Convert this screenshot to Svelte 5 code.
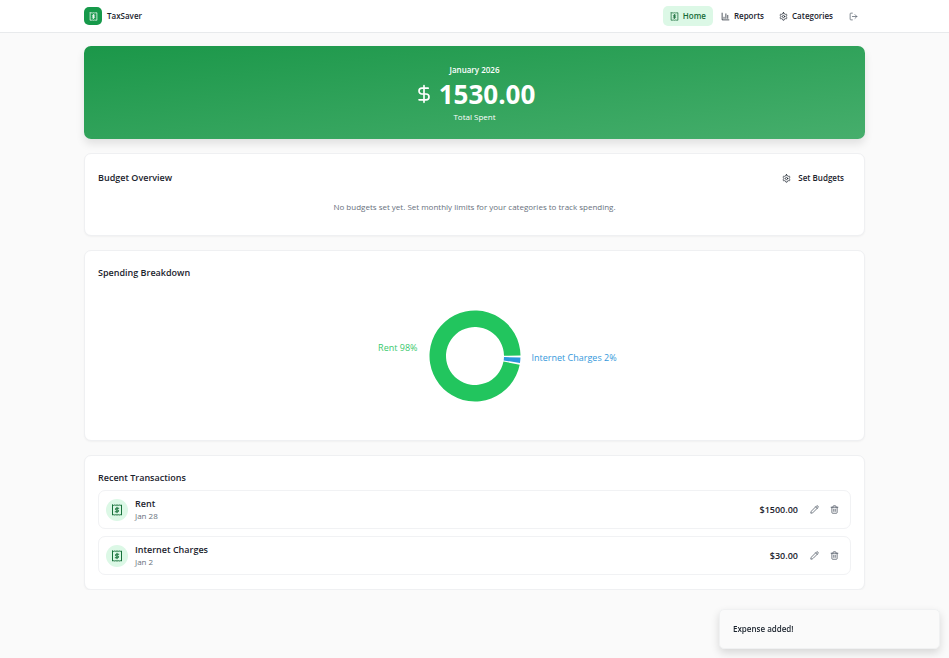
<script>
  const transactions = [
    { name: 'Rent', date: 'Jan 28', amount: '$1500.00' },
    { name: 'Internet Charges', date: 'Jan 2', amount: '$30.00' }
  ];

  const outer = 45.5;
  const inner = 29;

  // Angles run clockwise in degrees, starting at three o'clock.
  function ring(from, to) {
    const point = (r, deg) => {
      const a = (deg * Math.PI) / 180;
      return `${(r * Math.cos(a)).toFixed(3)} ${(r * Math.sin(a)).toFixed(3)}`;
    };
    const large = to - from > 180 ? 1 : 0;
    return `M${point(outer, from)}A${outer} ${outer} 0 ${large} 1 ${point(outer, to)}L${point(inner, to)}A${inner} ${inner} 0 ${large} 0 ${point(inner, from)}Z`;
  }

  const slices = [
    { color: '#22c55e', d: ring(11, 359.5) },
    { color: '#2b97dc', d: ring(2, 8.8) }
  ];
</script>

{#snippet receipt()}
  <svg class="icon" viewBox="0 0 24 24" aria-hidden="true">
    <path d="M3 2v20l2.500-.6 2 .6 2-.6 2.500.6 2.500-.6 2 .6 2-.6 2.500.6V2l-2.500.6-2-.6-2 .6L12 2l-2.500.6-2-.6-2 .6Z" />
    <path d="M15.500 8.500h-5a1.750 1.750 0 1 0 0 3.500h3a1.750 1.750 0 1 1 0 3.500H8.500" />
    <path d="M12 17.5v-11" />
  </svg>
{/snippet}

{#snippet gear()}
  <svg class="icon" viewBox="0 0 24 24" aria-hidden="true">
    <path d="M12.22 2h-.44a2 2 0 0 0-2 2v.18a2 2 0 0 1-1 1.73l-.43.25a2 2 0 0 1-2 0l-.15-.08a2 2 0 0 0-2.73.73l-.22.38a2 2 0 0 0 .73 2.73l.15.1a2 2 0 0 1 1 1.72v.51a2 2 0 0 1-1 1.74l-.15.09a2 2 0 0 0-.73 2.73l.22.38a2 2 0 0 0 2.73.73l.15-.08a2 2 0 0 1 2 0l.43.25a2 2 0 0 1 1 1.73V20a2 2 0 0 0 2 2h.44a2 2 0 0 0 2-2v-.18a2 2 0 0 1 1-1.73l.43-.25a2 2 0 0 1 2 0l.15.08a2 2 0 0 0 2.73-.73l.22-.39a2 2 0 0 0-.73-2.73l-.15-.08a2 2 0 0 1-1-1.74v-.5a2 2 0 0 1 1-1.74l.15-.09a2 2 0 0 0 .73-2.73l-.22-.38a2 2 0 0 0-2.73-.73l-.15.08a2 2 0 0 1-2 0l-.43-.25a2 2 0 0 1-1-1.73V4a2 2 0 0 0-2-2z" />
    <circle cx="12" cy="12" r="3" />
  </svg>
{/snippet}

<div class="page">
  <header>
    <div class="bar">
      <a class="brand" href="#home">
        <span class="logo">{@render receipt()}</span>
        TaxSaver
      </a>
      <nav>
        <a class="active" href="#home">{@render receipt()}Home</a>
        <a href="#reports">
          <svg class="icon" viewBox="0 0 24 24" aria-hidden="true">
            <path d="M3 3v18h18M18 17V9M13 17V5M8 17v-3" />
          </svg>
          Reports
        </a>
        <a href="#categories">{@render gear()}Categories</a>
        <button class="logout" aria-label="Log out">
          <svg class="icon" viewBox="0 0 24 24" aria-hidden="true">
            <path d="M9 21H5a2 2 0 0 1-2-2V5a2 2 0 0 1 2-2h4M16 17l5-5-5-5M21 12H9" />
          </svg>
        </button>
      </nav>
    </div>
  </header>

  <main>
    <section class="hero">
      <p class="month">January 2026</p>
      <p class="total">
        <svg class="icon" viewBox="0 0 24 24" aria-hidden="true">
          <path d="M12 2v20M17 5H9.500a3.500 3.500 0 0 0 0 7h5a3.500 3.500 0 0 1 0 7H6" />
        </svg>
        1530.00
      </p>
      <p class="caption">Total Spent</p>
    </section>

    <section class="card budget">
      <div class="heading">
        <h2>Budget Overview</h2>
        <button class="set">{@render gear()}Set Budgets</button>
      </div>
      <p class="empty">No budgets set yet. Set monthly limits for your categories to track spending.</p>
    </section>

    <section class="card">
      <h2>Spending Breakdown</h2>
      <div class="chart">
        <span class="label rent">Rent 98%</span>
        <svg class="donut" viewBox="-46 -46 92 92" role="img" aria-label="Spending by category">
          {#each slices as slice}
            <path d={slice.d} fill={slice.color} />
          {/each}
        </svg>
        <span class="label internet">Internet Charges 2%</span>
      </div>
    </section>

    <section class="card recent">
      <h2>Recent Transactions</h2>
      <ul>
        {#each transactions as item}
          <li>
            <span class="badge">{@render receipt()}</span>
            <div class="details">
              <p class="name">{item.name}</p>
              <p class="date">{item.date}</p>
            </div>
            <span class="amount">{item.amount}</span>
            <button class="action" aria-label="Edit {item.name}">
              <svg class="icon" viewBox="0 0 24 24" aria-hidden="true">
                <path d="M21.174 6.812a1 1 0 0 0-3.986-3.987L3.842 16.174a2 2 0 0 0-.5.83l-1.321 4.352a.5.5 0 0 0 .623.622l4.353-1.32a2 2 0 0 0 .83-.497zM15 5l4 4" />
              </svg>
            </button>
            <button class="action" aria-label="Delete {item.name}">
              <svg class="icon" viewBox="0 0 24 24" aria-hidden="true">
                <path d="M3 6h18M19 6v14a2 2 0 0 1-2 2H7a2 2 0 0 1-2-2V6M8 6V4a2 2 0 0 1 2-2h4a2 2 0 0 1 2 2v2M10 11v6M14 11v6" />
              </svg>
            </button>
          </li>
        {/each}
      </ul>
    </section>
  </main>

  <div class="toast" role="status">Expense added!</div>
</div>

<style>
  :global(body) {
    background: #fafafa;
  }

  .page {
    font-family: 'Open Sans', 'Noto Sans', sans-serif;
    font-size: 8px;
    line-height: 12px;
    color: #1b232d;
  }

  .page * {
    box-sizing: border-box;
  }

  p,
  h2,
  ul {
    margin: 0;
    padding: 0;
  }

  a {
    color: inherit;
    text-decoration: none;
  }

  button {
    border: 0;
    background: none;
    padding: 0;
    font: inherit;
    color: inherit;
    cursor: pointer;
  }

  .icon {
    width: 9px;
    height: 9px;
    flex: none;
    fill: none;
    stroke: currentColor;
    stroke-width: 2;
    stroke-linecap: round;
    stroke-linejoin: round;
  }

  header {
    background: #fff;
    border-bottom: 1px solid #e8eaec;
  }

  .bar,
  main {
    max-width: 781px;
    margin: 0 auto;
  }

  .bar {
    height: 32px;
    display: flex;
    align-items: center;
    justify-content: space-between;
  }

  .brand,
  nav,
  nav a {
    display: flex;
    align-items: center;
  }

  .brand {
    gap: 5px;
    font-size: 8px;
    font-weight: 600;
  }

  .logo {
    display: grid;
    place-items: center;
    width: 18px;
    height: 18px;
    border-radius: 5px;
    background: #16994a;
    color: #fff;
  }

  nav {
    gap: 1px;
    font-weight: 600;
  }

  nav a {
    height: 20px;
    padding: 0 7px;
    gap: 4px;
    border-radius: 5px;
  }

  nav .active {
    background: #dcf8e6;
    color: #176b38;
  }

  .logout {
    display: grid;
    place-items: center;
    width: 24px;
    height: 20px;
    color: #5b6470;
  }

  main {
    padding-top: 13px;
    display: flex;
    flex-direction: column;
    gap: 14px;
  }

  .hero {
    padding: 18px 14px 16px;
    border-radius: 7px;
    background: linear-gradient(to bottom right, #1b9749, #46ae6c);
    box-shadow: 0 5px 9px rgba(0, 0, 0, 0.1);
    color: #fff;
    text-align: center;
  }

  .month {
    font-weight: 600;
  }

  .total {
    display: flex;
    align-items: center;
    justify-content: center;
    gap: 5px;
    padding-top: 1px;
    font-size: 26px;
    font-weight: 700;
    line-height: 34px;
  }

  .total .icon {
    width: 20px;
    height: 20px;
  }

  .card {
    padding: 14px 13px;
    border: 1px solid #eff0f2;
    border-radius: 7px;
    background: #fff;
    box-shadow: 0 1px 2px rgba(0, 0, 0, 0.04);
  }

  h2 {
    font-size: 9px;
    line-height: 16px;
    font-weight: 600;
  }

  .heading {
    display: flex;
    align-items: center;
    justify-content: space-between;
    height: 20px;
  }

  .set {
    display: flex;
    align-items: center;
    gap: 7px;
    padding: 4px 7px;
    font-weight: 600;
  }

  .empty {
    padding: 13px 0 8px;
    text-align: center;
    color: #68717d;
  }

  .chart {
    display: grid;
    grid-template-columns: 1fr 92px 1fr;
    align-items: center;
    gap: 11px;
    height: 145px;
    padding-top: 4px;
  }

  .donut {
    width: 92px;
    height: 92px;
  }

  .label {
    font-size: 9px;
  }

  .rent {
    padding-bottom: 16px;
    text-align: right;
    color: #38c96d;
  }

  .internet {
    padding-top: 4px;
    color: #3498db;
  }

  ul {
    display: flex;
    flex-direction: column;
    gap: 7px;
    margin-top: 4px;
    list-style: none;
  }

  li {
    display: flex;
    align-items: center;
    height: 39px;
    padding: 0 6px 0 7px;
    border: 1px solid #f1f2f4;
    border-radius: 7px;
  }

  .badge {
    display: grid;
    place-items: center;
    width: 22px;
    height: 22px;
    border-radius: 50%;
    background: #dcf8e6;
    color: #17713a;
  }

  .badge .icon {
    width: 12px;
    height: 12px;
  }

  .details {
    flex: 1;
    padding-left: 7px;
  }

  .name,
  .amount {
    font-size: 9px;
    font-weight: 600;
  }

  .date {
    color: #68717d;
  }

  .amount {
    margin-right: 6px;
  }

  .action {
    display: grid;
    place-items: center;
    width: 20px;
    height: 20px;
    color: #4b5460;
  }

  .toast {
    position: fixed;
    right: 9px;
    bottom: 9px;
    width: 221px;
    padding: 13px;
    border: 1px solid #f0f1f2;
    border-radius: 5px;
    background: #fafafa;
    box-shadow: 0 4px 9px rgba(0, 0, 0, 0.14);
    font-weight: 600;
  }
</style>
